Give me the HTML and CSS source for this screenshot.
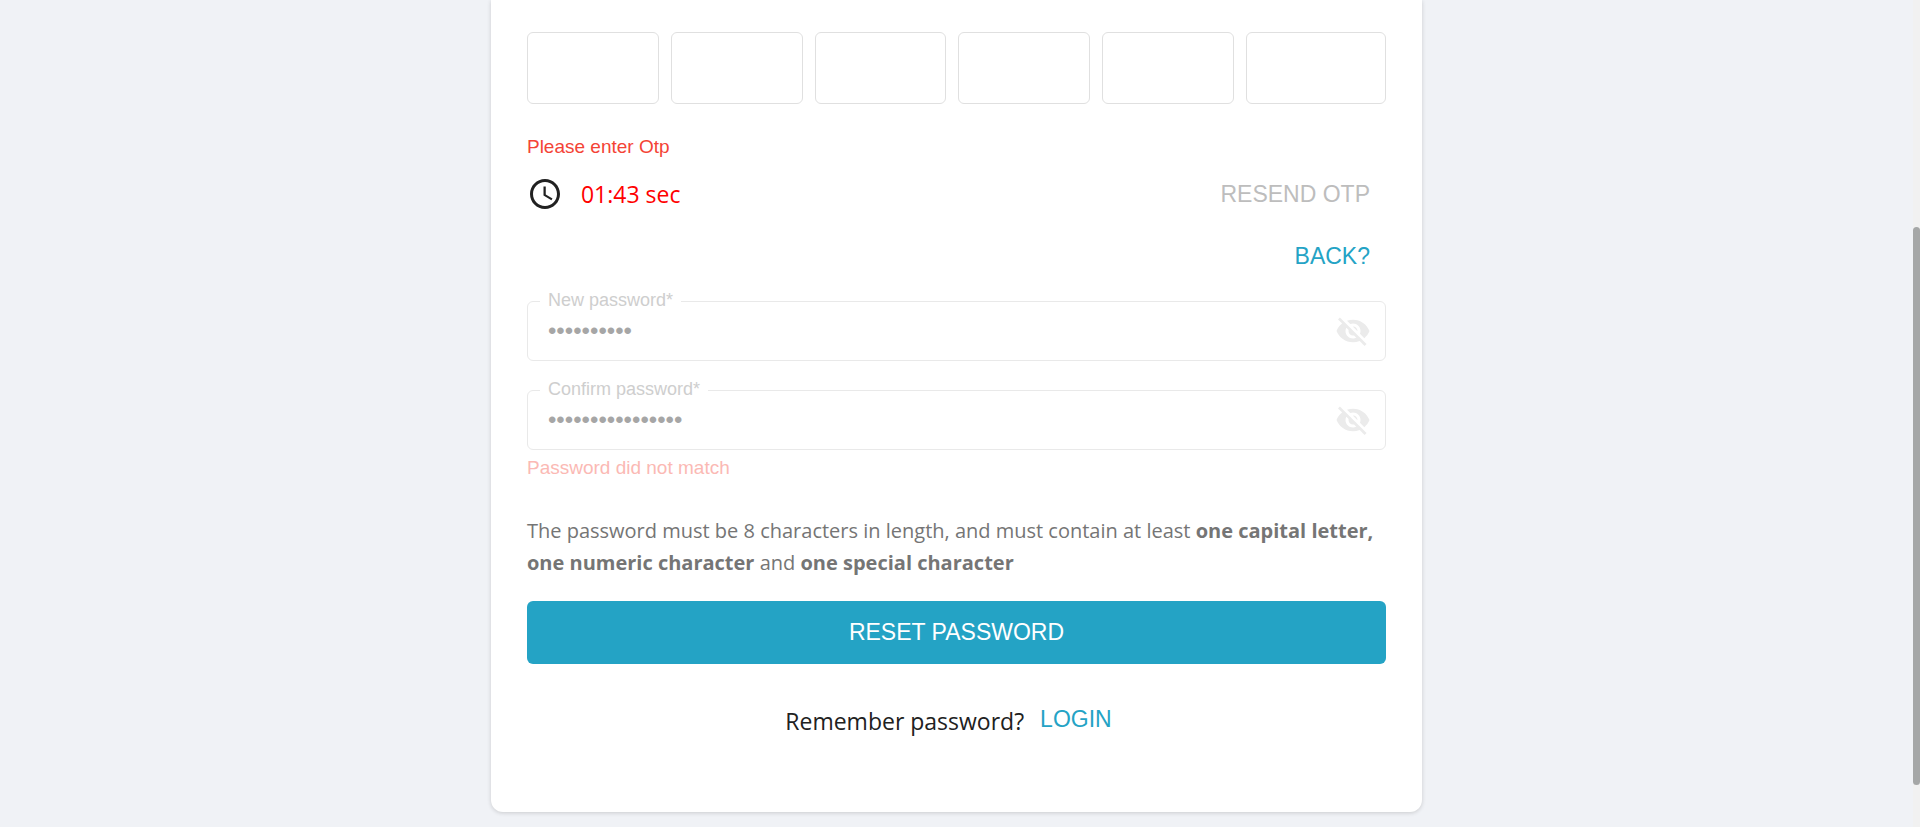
FILE: index.html
```html
<!DOCTYPE html>
<html lang="en">
<head>
<meta charset="utf-8">
<title>Reset password</title>
<link rel="stylesheet" href="styles.css">
</head>
<body>
<div class="page">
  <main class="viewport">
    <form class="card">
      <div class="otp">
        <input class="otp-digit" type="text" maxlength="1" aria-label="Digit 1">
        <input class="otp-digit" type="text" maxlength="1" aria-label="Digit 2">
        <input class="otp-digit" type="text" maxlength="1" aria-label="Digit 3">
        <input class="otp-digit" type="text" maxlength="1" aria-label="Digit 4">
        <input class="otp-digit" type="text" maxlength="1" aria-label="Digit 5">
        <input class="otp-digit" type="text" maxlength="1" aria-label="Digit 6">
      </div>
      <p class="helper">Please enter Otp</p>
      <div class="timer-row">
        <svg class="icon clock" viewBox="0 0 24 24" aria-hidden="true"><path d="M11.99 2C6.47 2 2 6.48 2 12s4.47 10 9.99 10C17.52 22 22 17.52 22 12S17.52 2 11.99 2zM12 20c-4.42 0-8-3.58-8-8s3.58-8 8-8 8 3.58 8 8-3.58 8-8 8z"/><path d="M12.5 7H11v6l5.25 3.15.75-1.23-4.5-2.67z"/></svg>
        <span class="timer">01:43 sec</span>
        <button class="text-button resend" type="button" disabled>RESEND OTP</button>
      </div>
      <div class="back-row">
        <button class="text-button" type="button">BACK?</button>
      </div>
      <div class="field">
        <label class="field-label" for="new-password">New password*</label>
        <input class="field-input" id="new-password" type="password" value="abcdefghij" disabled>
        <button class="eye" type="button" aria-label="Show new password" disabled>
          <svg class="icon" viewBox="0 0 24 24" aria-hidden="true"><path d="M12 7c2.76 0 5 2.24 5 5 0 .65-.13 1.26-.36 1.83l2.92 2.92c1.51-1.26 2.7-2.89 3.43-4.75-1.73-4.39-6-7.5-11-7.5-1.4 0-2.74.25-3.98.7l2.16 2.16C10.74 7.13 11.35 7 12 7zM2 4.27l2.28 2.28.46.46C3.08 8.3 1.78 10.02 1 12c1.73 4.39 6 7.5 11 7.5 1.55 0 3.03-.3 4.38-.84l.42.42L19.73 22 21 20.73 3.27 3 2 4.27zM7.53 9.8l1.55 1.55c-.05.21-.08.43-.08.65 0 1.66 1.34 3 3 3 .22 0 .44-.03.65-.08l1.55 1.55c-.67.33-1.41.53-2.2.53-2.76 0-5-2.24-5-5 0-.79.2-1.53.53-2.2zm4.31-.78l3.15 3.15.02-.16c0-1.66-1.34-3-3-3l-.17.01z"/></svg>
        </button>
      </div>
      <div class="field">
        <label class="field-label" for="confirm-password">Confirm password*</label>
        <input class="field-input" id="confirm-password" type="password" value="abcdefghijklmnop" disabled>
        <button class="eye" type="button" aria-label="Show confirmed password" disabled>
          <svg class="icon" viewBox="0 0 24 24" aria-hidden="true"><path d="M12 7c2.76 0 5 2.24 5 5 0 .65-.13 1.26-.36 1.83l2.92 2.92c1.51-1.26 2.7-2.89 3.43-4.75-1.73-4.39-6-7.5-11-7.5-1.4 0-2.74.25-3.98.7l2.16 2.16C10.74 7.13 11.35 7 12 7zM2 4.27l2.28 2.28.46.46C3.08 8.3 1.78 10.02 1 12c1.73 4.39 6 7.5 11 7.5 1.55 0 3.03-.3 4.38-.84l.42.42L19.73 22 21 20.73 3.27 3 2 4.27zM7.53 9.8l1.55 1.55c-.05.21-.08.43-.08.65 0 1.66 1.34 3 3 3 .22 0 .44-.03.65-.08l1.55 1.55c-.67.33-1.41.53-2.2.53-2.76 0-5-2.24-5-5 0-.79.2-1.53.53-2.2zm4.31-.78l3.15 3.15.02-.16c0-1.66-1.34-3-3-3l-.17.01z"/></svg>
        </button>
      </div>
      <p class="helper mismatch">Password did not match</p>
      <p class="rules">The password must be 8 characters in length, and must contain at least <strong>one capital letter, one numeric character</strong> and <strong>one special character</strong></p>
      <button class="submit" type="submit">RESET PASSWORD</button>
      <div class="login-row">
        <span class="remember">Remember password?</span>
        <button class="text-button" type="button">LOGIN</button>
      </div>
    </form>
  </main>
  <div class="scroll-track"><div class="scroll-thumb"></div></div>
</div>
</body>
</html>
```

FILE: styles.css
```css
* {
  box-sizing: border-box;
}

body {
  margin: 0;
  background: #f0f2f6;
  color: #212121;
  font-family: "Liberation Sans", Arial, sans-serif;
}

p {
  margin: 0;
}

button {
  border: 0;
  background: none;
  font-family: inherit;
}

.page {
  display: flex;
  min-height: 100vh;
}

.viewport {
  flex: 1;
}

.card {
  width: 48.67%;
  min-width: 480px;
  margin: 0 auto 15px;
  padding: 32px 36px 63px;
  background: #fff;
  border-radius: 0 0 12px 12px;
  box-shadow: 0 1px 4px rgba(0, 0, 0, 0.16);
}

.otp {
  display: grid;
  grid-template-columns: repeat(5, 132fr) 140fr;
  gap: 12px;
}

.otp-digit {
  min-width: 0;
  width: 100%;
  height: 72px;
  border: 1px solid #e0e0e0;
  border-radius: 6px;
  background: #fff;
  font-size: 23px;
  text-align: center;
}

.helper {
  margin-top: 28px;
  color: #f44336;
  font-size: 19px;
  line-height: 30px;
}

.icon {
  display: block;
  width: 36px;
  height: 36px;
  fill: currentColor;
}

.timer-row {
  display: flex;
  align-items: center;
  height: 64px;
}

.timer {
  margin-left: 18px;
  color: #f00;
  font-family: "Open Sans", "Noto Sans", sans-serif;
  font-size: 23px;
}

.text-button {
  padding: 0 16px;
  color: #24a3c5;
  font-size: 23px;
  line-height: 60px;
}

.resend {
  margin-left: auto;
  color: #bdbdbd;
}

.back-row {
  display: flex;
  justify-content: flex-end;
  margin-bottom: 15px;
}

.field {
  position: relative;
  display: flex;
  align-items: center;
  height: 60px;
  padding: 0 14px 0 20px;
  border: 1px solid #e9e9e9;
  border-radius: 6px;
}

.field + .field {
  margin-top: 29px;
}

.field-label {
  position: absolute;
  top: -15px;
  left: 12px;
  padding: 0 8px;
  background: #fff;
  color: #cecece;
  font-size: 18px;
  line-height: 26px;
}

.field-input {
  flex: 1;
  min-width: 0;
  padding: 0;
  border: 0;
  background: none;
  color: #a6a6a6;
  font-family: inherit;
  font-size: 24px;
}

.eye {
  padding: 0;
  color: #ebebeb;
}

.mismatch {
  margin-top: 3px;
  color: #fbb9b4;
}

.rules {
  margin-top: 32px;
  color: #757575;
  font-family: "Open Sans", "Noto Sans", sans-serif;
  font-size: 20px;
  line-height: 32px;
}

.submit {
  width: 100%;
  margin-top: 22px;
  height: 63px;
  border-radius: 6px;
  background: #24a3c5;
  color: #fff;
  font-size: 23px;
}

.login-row {
  display: flex;
  justify-content: center;
  align-items: center;
  margin-top: 25px;
}

.remember {
  padding-top: 4px;
  font-family: "Open Sans", "Noto Sans", sans-serif;
  font-size: 23px;
}

.scroll-track {
  width: 7px;
  height: 100vh;
  padding-top: 227px;
  background: #f1f1f1;
}

.scroll-thumb {
  height: 93%;
  border-radius: 4px;
  background: #a5a7a7;
}
```
